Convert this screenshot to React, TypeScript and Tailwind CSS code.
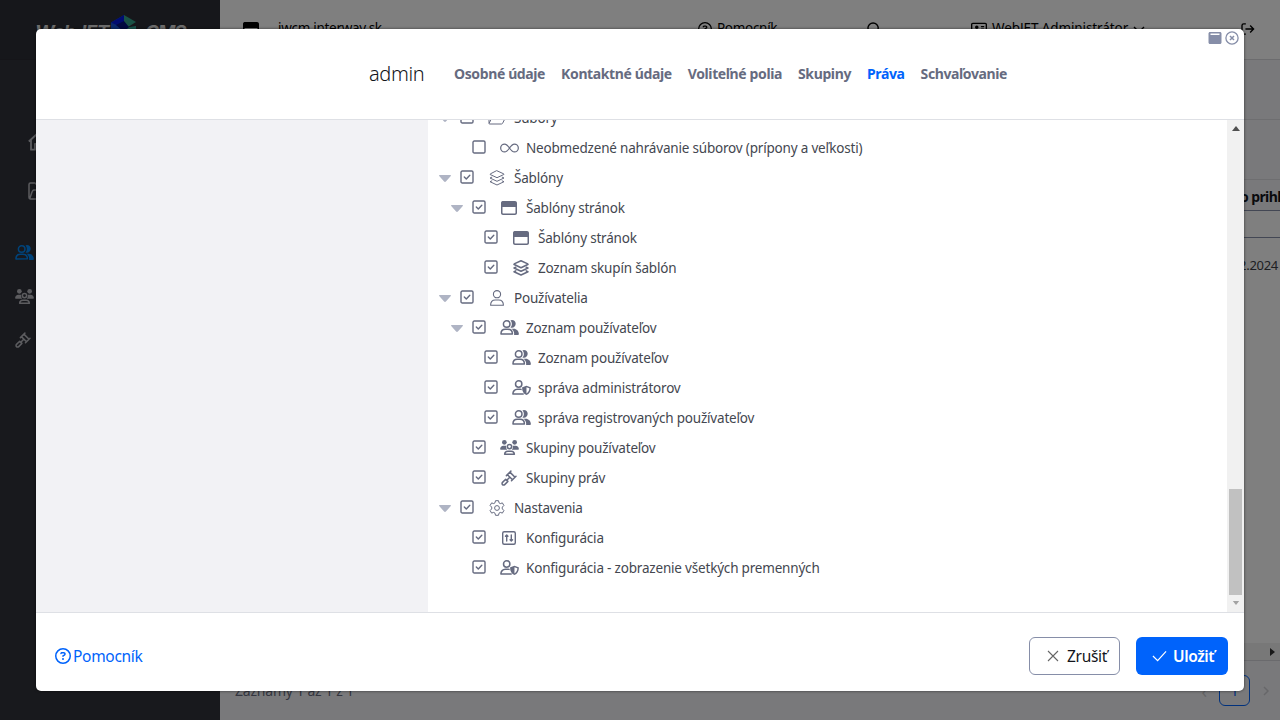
import type { ReactNode } from 'react';
import { FaRegAddressCard, FaRegCircleQuestion, FaRegWindowMaximize } from 'react-icons/fa6';

type IconProps = { className?: string };

function Users({ className = '' }: IconProps) {
  return (
    <svg viewBox="0 0 20 16" className={className} fill="none" stroke="currentColor" strokeWidth="1.6">
      <circle cx="7" cy="4.3" r="3.5" />
      <path d="M.9 14.8c0-3 2-4.9 4.7-4.9h2.8c2.7 0 4.7 1.9 4.7 4.9z" strokeLinejoin="round" />
      <path
        d="M11 8c1-.9 1.500-2.200 1.500-3.700S12 1.500 11 .500C11.400.200 12 0 12.600 0c2.300 0 4 1.800 4 4s-1.700 4.300-4 4.300c-.6 0-1.100-.1-1.600-.3zM12.100 9.300h2.400c3 0 5.500 2.500 5.500 5.700 0 .6-.4 1-.9 1h-4.300c.1-.3.200-.7.200-1.100 0-2.400-1.100-4.400-2.900-5.600z"
        fill="currentColor"
        stroke="none"
      />
    </svg>
  );
}

function Team({ className = '' }: IconProps) {
  return (
    <svg viewBox="0 0 20 16" className={className} fill="currentColor">
      <circle cx="4.500" cy="2.500" r="2.500" />
      <circle cx="15.500" cy="2.500" r="2.500" />
      <path d="M0 9.500C0 7.400 1.500 6 3.400 6h2.100c.4 0 .8.100 1.100.200-.5 1.500-.1 3 .9 4.100H.7c-.4 0-.7-.3-.7-.8zM20 9.500C20 7.400 18.500 6 16.600 6h-2.100c-.4 0-.8.100-1.100.200.5 1.500.1 3-.9 4.100h6.800c.4 0 .7-.3.700-.8z" />
      <circle cx="10" cy="7" r="2.300" fill="none" stroke="currentColor" strokeWidth="1.600" />
      <path d="M4.800 15.200c.2-2.100 1.500-3.300 3.400-3.300h3.600c1.900 0 3.200 1.200 3.400 3.300z" fill="none" stroke="currentColor" strokeWidth="1.600" strokeLinejoin="round" />
    </svg>
  );
}

function UserShield({ className = '' }: IconProps) {
  return (
    <svg viewBox="0 0 20 16" className={className} fill="none" stroke="currentColor" strokeWidth="1.600">
      <circle cx="7" cy="4.200" r="3.400" />
      <path d="M9.500 10c-.3-.1-.7-.1-1-.1h-3C2.800 9.900.8 12 .8 15h11" strokeLinecap="round" strokeLinejoin="round" />
      <path d="M15.300 6l4.400 1.700c.2 0 .3.300.3.500 0 3.700-1.700 6.500-4.700 7.800-3-1.300-4.700-4.100-4.700-7.800 0-.2.100-.5.300-.5zM15.300 7.700v6.600c1.900-1 3-2.900 3.100-5.400z" fill="currentColor" fillRule="evenodd" stroke="none" />
    </svg>
  );
}

function Gavel({ className = '' }: IconProps) {
  return (
    <svg viewBox="0 0 16 16" className={className} fill="none" stroke="currentColor" strokeWidth="1.500" strokeLinejoin="round" strokeLinecap="round">
      <path d="M5.400 5.600L9.900 1.100M10.500 10.700L15 6.200M6.400 4.600l5.100 5.100M8.900 2.100L14 7.200M8.300 7.700L6 10" />
      <path d="M4.700 9.200l2.200 2.200-3.200 3.200c-.6.600-1.600.6-2.200 0s-.6-1.600 0-2.200z" />
    </svg>
  );
}

function Layers({ className = '', bold = false }: IconProps & { bold?: boolean }) {
  return (
    <svg viewBox="0 0 16 16" className={className} fill="none" stroke="currentColor" strokeWidth={bold ? 1.5 : 1} strokeLinejoin="round" strokeLinecap="round">
      <path d="M8 .8l6.800 3.100c.3.100.3.500 0 .6L8 7.700 1.200 4.500c-.3-.1-.3-.5 0-.6z" />
      <path d="M2.800 7.200L1 8l7 3.300L15 8l-1.800-.8M2.800 10.900l-1.800.8L8 15l7-3.300-1.800-.8" />
    </svg>
  );
}

function Infinity({ className = '' }: IconProps) {
  return (
    <svg viewBox="0 0 20 16" className={className} fill="none" stroke="currentColor" strokeWidth="1.300">
      <path d="M10 8C8.300 5.500 6.900 3.800 4.900 3.800a4.200 4.200 0 000 8.400C6.900 12.200 8.300 10.500 10 8s3.100-4.200 5.100-4.200a4.200 4.200 0 010 8.400c-2 0-3.400-1.700-5.100-4.200z" />
    </svg>
  );
}

function Person({ className = '' }: IconProps) {
  return (
    <svg viewBox="0 0 16 16" className={className} fill="none" stroke="currentColor" strokeWidth="1.100">
      <circle cx="8" cy="4.200" r="3.600" />
      <path d="M1.600 15.300c0-3.200 2-5.300 4.700-5.300h3.400c2.700 0 4.700 2.100 4.700 5.300z" strokeLinejoin="round" />
    </svg>
  );
}

function Gear({ className = '' }: IconProps) {
  return (
    <svg viewBox="0 0 16 16" className={className} fill="none" stroke="currentColor" strokeWidth="1" strokeLinejoin="round">
      <path d="M6.500.7h3l.5 2.100 1.300.8 2.100-.7 1.500 2.600-1.600 1.600v1.800l1.600 1.600-1.500 2.600-2.100-.7-1.300.8-.5 2.100h-3L6 13.200l-1.300-.8-2.100.7-1.500-2.600 1.600-1.600V7.100L1.100 5.500l1.500-2.600 2.100.7L6 2.800z" />
      <circle cx="8" cy="8" r="2.400" />
    </svg>
  );
}

function SquareSliders({ className = '' }: IconProps) {
  return (
    <svg viewBox="0 0 16 16" className={className} fill="none" stroke="currentColor" strokeWidth="1.400" strokeLinejoin="round" strokeLinecap="round">
      <rect x="1.700" y="1.700" width="12.600" height="12.600" rx="1.500" />
      <path d="M5.700 11v-5.500M4.500 6.300l1.200-1.300 1.200 1.300M10.300 5v5.500M9.100 9.700l1.200 1.300 1.200-1.300" />
    </svg>
  );
}

function Folder({ className = '' }: IconProps) {
  return (
    <svg viewBox="0 0 20 16" className={className} fill="none" stroke="currentColor" strokeWidth="1" strokeLinejoin="round">
      <path d="M2 13.500V3c0-.6.400-1 1-1h4l2 2h6c.6 0 1 .4 1 1v2M2 13.500c.2.300.5.500 1 .5h11.500c.5 0 .9-.3 1.100-.7l2.700-5.400c.2-.5 0-.9-.5-.9H6c-.4 0-.8.200-1 .6z" />
    </svg>
  );
}

function Box({ checked }: { checked: boolean }) {
  return (
    <svg viewBox="0 0 14 14" className="size-3.5 shrink-0" fill="none" stroke="currentColor" strokeWidth="1.400">
      <rect x="1" y="1" width="12" height="12" rx="1.300" />
      {checked && <path d="M4.300 7l2 2L9.800 5.200" strokeLinecap="round" strokeLinejoin="round" />}
    </svg>
  );
}

const team = <Team className="ml-px h-[15px] w-[19px] shrink-0" />;
const users = <Users className="ml-px h-[15px] w-[19px] shrink-0" />;
const shield = <UserShield className="ml-px h-[15px] w-[19px] shrink-0" />;
const win = <FaRegWindowMaximize className="size-4" />;

type Node = { level: 0 | 1 | 2; open?: boolean; off?: boolean; icon: ReactNode; label: string };

const nodes: Node[] = [
  { level: 0, open: true, off: true, icon: <Folder className="h-4 w-5" />, label: 'Súbory' },
  { level: 1, off: true, icon: <Infinity className="ml-px h-4 w-[19px] shrink-0" />, label: 'Neobmedzené nahrávanie súborov (prípony a veľkosti)' },
  { level: 0, open: true, icon: <Layers className="size-4" />, label: 'Šablóny' },
  { level: 1, open: true, icon: win, label: 'Šablóny stránok' },
  { level: 2, icon: win, label: 'Šablóny stránok' },
  { level: 2, icon: <Layers bold className="size-4" />, label: 'Zoznam skupín šablón' },
  { level: 0, open: true, icon: <Person className="size-4" />, label: 'Používatelia' },
  { level: 1, open: true, icon: users, label: 'Zoznam používateľov' },
  { level: 2, icon: users, label: 'Zoznam používateľov' },
  { level: 2, icon: shield, label: 'správa administrátorov' },
  { level: 2, icon: users, label: 'správa registrovaných používateľov' },
  { level: 1, icon: team, label: 'Skupiny používateľov' },
  { level: 1, icon: <Gavel className="size-4" />, label: 'Skupiny práv' },
  { level: 0, open: true, icon: <Gear className="size-4" />, label: 'Nastavenia' },
  { level: 1, icon: <SquareSliders className="size-4" />, label: 'Konfigurácia' },
  { level: 1, icon: shield, label: 'Konfigurácia - zobrazenie všetkých premenných' },
];

const indents = ['pl-[11px]', 'pl-[23px]', 'pl-[35px]'];

function TreeRow({ node }: { node: Node }) {
  return (
    <li className={`flex h-[30px] shrink-0 items-center text-[#666b80] ${indents[node.level]}`}>
      <svg viewBox="0 0 12 7" className={`mt-px h-[7px] w-3 shrink-0 fill-[#afb4c4] ${node.open ? '' : 'invisible'}`}>
        <path d="M.7 0h10.600c.6 0 .9.700.5 1.100L6.900 6.500c-.5.500-1.300.5-1.800 0L.2 1.100C-.2.700.1 0 .7 0z" />
      </svg>
      <span className="mb-0.5 ml-[9px] flex">
        <Box checked={!node.off} />
      </span>
      <span className="mb-px ml-[13px] flex h-4 w-5 items-center justify-center">{node.icon}</span>
      <span className="ml-[7px] whitespace-nowrap pt-px text-[13.5px] tracking-[-0.19px] text-[#444750]">{node.label}</span>
    </li>
  );
}

const tabs = ['Osobné údaje', 'Kontaktné údaje', 'Voliteľné polia', 'Skupiny', 'Práva', 'Schvaľovanie'];

function Logo() {
  return (
    <div className="flex items-start pl-[35px] pt-[15px] text-[19px] font-bold italic leading-none text-[#d8d8d8]">
      <span className="mt-2 w-[69px] font-['Inter',sans-serif] tracking-[-0.6px]">WebJET</span>
      <svg viewBox="0 0 26 30" className="ml-[7px] h-[30px] w-[26px]">
        <path d="M13 0L0 7.500V22l13 8z" fill="#1455d8" />
        <path d="M13 0L0 7.500l13 6z" fill="#0018e0" />
        <path d="M13 0l12 7-8 5-4-2z" fill="#35a58c" />
        <path d="M13 13l12-2v10l-12 9z" fill="#2fa89a" />
        <path d="M5 10l8-4 5 6-5 5z" fill="#041480" />
      </svg>
      <span className="ml-2 mt-2 font-['Inter',sans-serif] tracking-[-1.4px]">CMS</span>
    </div>
  );
}

function Sidebar() {
  return (
    <aside className="flex w-[220px] shrink-0 flex-col bg-[#30323b] text-[#b8b9bf]">
      <div className="h-[60px] shrink-0 border-b border-[#2a2b33] bg-[#2d2e36]">
        <Logo />
      </div>
      <svg viewBox="0 0 18 18" className="ml-7 mt-[73px] size-[18px]" fill="none" stroke="currentColor" strokeWidth="1.800" strokeLinejoin="round">
        <path d="M.8 8.500L9 1l8.200 7.500M3 7v9.700h4V11h4v5.700h4V7" />
      </svg>
      <svg viewBox="0 0 18 18" className="ml-7 mt-[31px] size-[18px]" fill="none" stroke="currentColor" strokeWidth="1.500" strokeLinejoin="round">
        <path d="M1 15V2.500C1 1.700 1.700 1 2.500 1H7l2 2h6v4M1.500 16.500C3 15 3.500 8 6 8h11l-3 9H2.500C1.500 17 1 16 1 15" />
      </svg>
      <Users className="ml-[15px] mt-[45px] h-[15px] w-[19px] text-[#0087f5]" />
      <Team className="ml-[15px] mt-[29px] h-[15px] w-[19px]" />
      <Gavel className="ml-[15px] mt-[28px] size-4" />
    </aside>
  );
}

function Page() {
  return (
    <div className="flex h-full w-full">
      <Sidebar />
      <main className="flex min-w-0 grow flex-col bg-[#f3f3f6] text-sm text-[#13151b]">
        <header className="flex h-[60px] shrink-0 items-center border-b border-[#d8d8dc] bg-white pb-px pl-[23px] text-black">
          <FaRegWindowMaximize className="size-4 shrink-0" />
          <span className="ml-[19px] w-[420px] shrink-0 text-[13.5px] tracking-[-0.3px]">iwcm.interway.sk</span>
          <FaRegCircleQuestion className="size-[14px] shrink-0" />
          <span className="ml-[5px] w-[150px] shrink-0 text-[13.5px] tracking-[-0.3px]">Pomocník</span>
          <svg viewBox="0 0 16 16" className="size-[15px] shrink-0" fill="none" stroke="currentColor" strokeWidth="1.500">
            <circle cx="6.500" cy="6.500" r="5.500" />
            <path d="M11 11l4 4" />
          </svg>
          <FaRegAddressCard className="ml-[89px] size-4 shrink-0" />
          <span className="ml-[5px] w-[141px] shrink-0 whitespace-nowrap text-[13.5px] tracking-[-0.1px]">WebJET Administrátor</span>
          <svg viewBox="0 0 12 8" className="mt-0.5 h-2 w-3 shrink-0" fill="none" stroke="currentColor" strokeWidth="1.400">
            <path d="M1 1l5 5 5-5" />
          </svg>
          <svg viewBox="0 0 16 14" className="-mt-px ml-auto mr-[25px] h-3 w-[14px] shrink-0" fill="none" stroke="currentColor" strokeWidth="1.600">
            <path d="M5.500 1H3a2 2 0 00-2 2v8a2 2 0 002 2h2.500M5 7h9.500M10.500 3l4 4-4 4" />
          </svg>
        </header>
        <div className="h-[60px] shrink-0 border-b border-[#dcdce0]" />
        <div className="h-[60px] shrink-0 border-b border-[#dcdce0]" />
        <div className="flex h-[31px] shrink-0 items-center justify-end overflow-hidden border-b border-[#868ea8] pt-1 font-bold">
          <span className="w-[40px] whitespace-nowrap tracking-[-0.6px]">o prihlásenie</span>
        </div>
        <div className="h-[27px] shrink-0 border-b border-[#868ea8] bg-white" />
        <div className="h-[405px] shrink-0 bg-white pr-0.5 pt-[18px] text-right text-[13px] tracking-[-0.3px] text-[#3c3f47]">07.02.2024</div>
        <div className="flex h-[18px] shrink-0 items-center justify-end border-b border-[#d5d5da] bg-[#f1f1f1] pr-[5px]">
          <svg viewBox="0 0 5 8" className="h-2 w-[5px]">
            <path d="M0 0l5 4-5 4z" fill="#333" />
          </svg>
        </div>
        <footer className="flex grow items-center pl-[15px] pr-[11px] text-[#686d80]">
          <span className="grow tracking-[-0.2px]">Záznamy 1 až 1 z 1</span>
          <span className="mr-3 text-lg text-[#c8c8cc]">‹</span>
          <span className="flex size-[31px] items-center justify-center rounded-md border border-[#0063fb] text-[#0063fb]">1</span>
          <svg viewBox="0 0 6 10" className="ml-[13px] h-2.5 w-1.5" fill="none" stroke="#cfcfd3" strokeWidth="1.500">
            <path d="M1 1l4 4-4 4" />
          </svg>
        </footer>
      </main>
    </div>
  );
}

function Dialog() {
  return (
    <section className="absolute left-9 top-[29px] flex h-[662px] w-[1208px] flex-col overflow-hidden rounded-[5px] bg-white shadow-[0_0_3px_rgba(0,0,0,0.6)]">
      <header className="flex h-[91px] shrink-0 items-center border-b border-[#dee0e5] pl-[333px]">
        <h1 className="w-[85px] text-[20px] font-light tracking-[-0.4px] text-[#13151b]">admin</h1>
        <nav className="flex gap-4 whitespace-nowrap text-sm font-bold tracking-[-0.38px] text-[#666b80]">
          {tabs.map((tab) => (
            <a key={tab} className={tab === 'Práva' ? 'text-[#0063fb]' : ''}>
              {tab}
            </a>
          ))}
        </nav>
        <div className="ml-auto mr-[5px] flex gap-[3px] self-start pt-0.5 text-[#868ea8]">
          <svg viewBox="0 0 14 14" className="size-[14px]">
            <path d="M2 1h10c.8 0 1.500.7 1.500 1.500v9c0 .8-.7 1.500-1.500 1.500H2C1.200 13 .5 12.300.5 11.500v-9C.5 1.700 1.200 1 2 1zM2.500 2.500v1.500h9V2.500z" fill="currentColor" fillRule="evenodd" />
          </svg>
          <svg viewBox="0 0 14 14" className="size-[14px]" fill="none" stroke="currentColor" strokeWidth="1.300">
            <circle cx="7" cy="7" r="6.100" />
            <path d="M5 5l4 4M9 5l-4 4" strokeWidth="1.500" />
          </svg>
        </div>
      </header>
      <div className="flex h-[492px] shrink-0">
        <div className="w-[392px] shrink-0 bg-[#f2f2f5]" />
        <ul className="flex grow flex-col overflow-hidden">
          <li className="-mt-[17px]" />
          {nodes.map((node, i) => (
            <TreeRow key={i} node={node} />
          ))}
        </ul>
        <div className="flex w-[17px] shrink-0 flex-col items-center bg-[#f1f1f1]">
          <svg viewBox="0 0 8 5" className="mt-[6px] h-[5px] w-2">
            <path d="M4 0l4 5H0z" fill="#505050" />
          </svg>
          <div className="mt-[358px] h-[106px] w-[13px] bg-[#c1c1c1]" />
          <svg viewBox="0 0 8 5" className="mt-[6px] h-[4px] w-2">
            <path d="M0 0h8L4 5z" fill="#a3a3a3" />
          </svg>
        </div>
      </div>
      <footer className="flex grow items-center border-t border-[#dee0e5] pl-[19px] pr-4 pt-2 text-[15.5px]">
        <a className="flex items-center gap-0.5 tracking-[-0.3px] text-[#0063fb]">
          <FaRegCircleQuestion className="size-4" />
          <span className="pt-0.5">Pomocník</span>
        </a>
        <button className="ml-auto flex h-[38px] w-[91px] items-center rounded-md border border-[#868ea8] pl-[17px] tracking-[-0.3px] text-[#13151b]">
          <svg viewBox="0 0 12 12" className="mr-2 size-3" fill="none" stroke="#666" strokeWidth="1.100">
            <path d="M1 1l10 10M11 1L1 11" />
          </svg>
          <span className="pt-0.5">Zrušiť</span>
        </button>
        <button className="ml-4 flex h-[38px] w-[92px] items-center rounded-md bg-[#0063fb] pl-4 font-semibold tracking-[-0.4px] text-white">
          <svg viewBox="0 0 16 12" className="mr-[6px] h-3 w-[15px]" fill="none" stroke="currentColor" strokeWidth="1.300">
            <path d="M1 6l5 5L15 1" />
          </svg>
          <span className="pt-0.5">Uložiť</span>
        </button>
      </footer>
    </section>
  );
}

export default function App() {
  return (
    <div className="relative h-[720px] w-[1280px] overflow-hidden font-['Noto_Sans','Open_Sans',sans-serif]">
      <Page />
      <div className="absolute inset-0 bg-black/50" />
      <Dialog />
    </div>
  );
}
